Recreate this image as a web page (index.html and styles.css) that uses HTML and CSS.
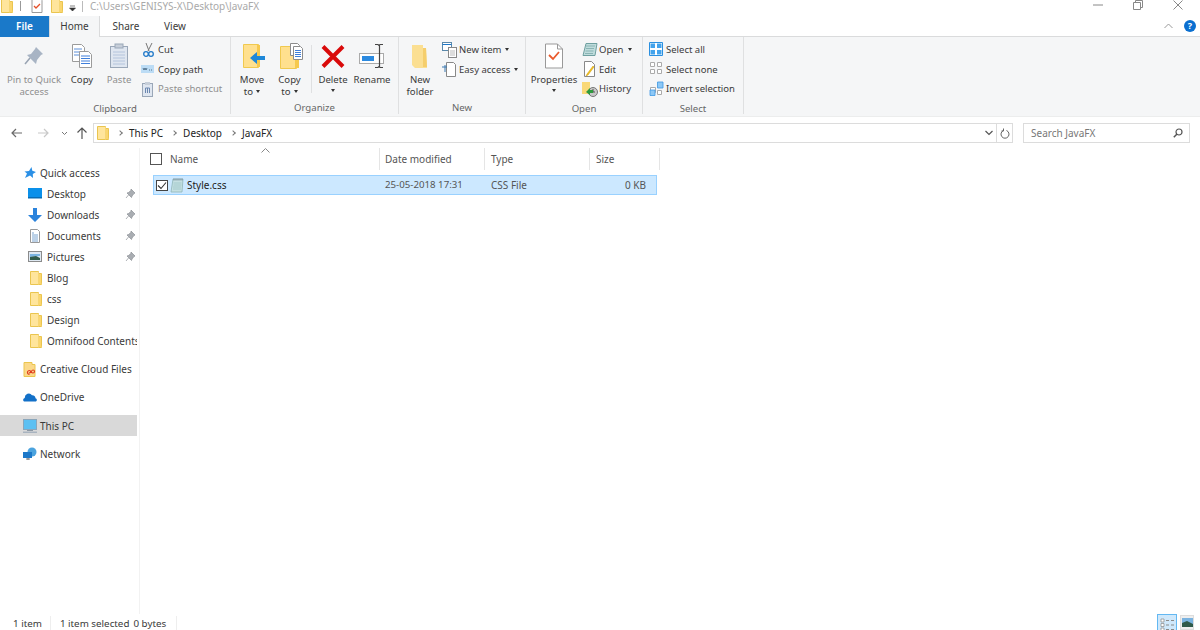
FILE: index.html
```html
<!DOCTYPE html>
<html lang="en">
<head>
<meta charset="utf-8">
<title>JavaFX</title>
<link rel="stylesheet" href="styles.css">
</head>
<body>
<svg class="defs" width="0" height="0">
  <symbol id="folder" viewBox="0 0 12 14"><path d="M.5.5h8v2h3v11H.5z" fill="#ffe59c" stroke="#eac54f"/><path d="M8.500 1v12.500M8.500 6l3 7.500" fill="none" stroke="#f6d675"/><path d="M9 3h2v10H9z" fill="#fbd66e"/></symbol>
  <symbol id="pin" viewBox="0 0 11 11"><path d="M6 1l4 4-1 .5-2 2.500-.5 1.500L2 5l1.500-.5L6 2.500zM3.500 7L1 10" fill="#a9adb2" stroke="#8d9196" stroke-width=".7"/></symbol>
</svg>

<div class="window">
  <header class="titlebar">
    <div class="qat">
      <svg class="q-folder" width="12" height="14"><use href="#folder"/></svg>
      <span class="q-sep"></span>
      <svg class="q-prop" width="12" height="16" viewBox="0 0 12 16"><path d="M1 .5h7l3 3v12H1z" fill="#fff" stroke="#9a9a9a"/><path d="M3 9l2 2 4-4" fill="none" stroke="#e5502a" stroke-width="1.300"/></svg>
      <svg class="q-folder2" width="12" height="14"><use href="#folder"/></svg>
      <svg class="q-down" width="7" height="7" viewBox="0 0 7 7"><path d="M1 1h5M.5 3h6L3.500 6z" fill="#333" stroke="#333" stroke-width=".6"/></svg>
      <span class="q-sep2"></span>
      <span class="path">C:\Users\GENISYS-X\Desktop\JavaFX</span>
    </div>
    <div class="winctl">
      <svg width="10" height="10" viewBox="0 0 10 10"><path d="M0 5h10" stroke="#888"/></svg>
      <svg width="10" height="10" viewBox="0 0 10 10"><path d="M.5 2.500h7v7h-7zM2.500 2.500v-2h7v7h-2" fill="none" stroke="#888"/></svg>
      <svg width="10" height="10" viewBox="0 0 10 10"><path d="M.5.500l9 9M9.500.500l-9 9" stroke="#888"/></svg>
    </div>
  </header>

  <nav class="tabs">
    <span class="tab tab-file">File</span>
    <span class="tab tab-home">Home</span>
    <span class="tab tab-share">Share</span>
    <span class="tab tab-view">View</span>
    <span class="tab-spacer"></span>
    <svg class="collapse" width="9" height="6" viewBox="0 0 9 6"><path d="M.5 5l4-4 4 4" fill="none" stroke="#999"/></svg>
    <span class="help">?</span>
  </nav>

  <section class="ribbon">
    <div class="group g-clip">
      <div class="group-body">
        <div class="big b-pin muted">
          <svg class="big-ico" width="22" height="26" viewBox="0 0 22 26"><path d="M13 4l7 7-2 1-4 5-1 4-9-9 4-1 4-5z" fill="#a8b4c4"/><path d="M7 15l-5 6" stroke="#98a3b2" stroke-width="1.500"/></svg>
          <span class="big-label">Pin to Quick<br>access</span>
        </div>
        <div class="big b-copy">
          <svg class="big-ico" width="22" height="26" viewBox="0 0 22 26"><path d="M1.500 1.500h9l3 3v14h-12z" fill="#fff" stroke="#9b9b9b"/><path d="M3 6h8M3 9h8M3 12h8" stroke="#5d8fd8"/><path d="M8.500 8.500h9l3 3v13h-12z" fill="#fff" stroke="#9b9b9b"/><path d="M10 13h9M10 15.500h9M10 18h9M10 20.500h9" stroke="#3f7fdb"/></svg>
          <span class="big-label">Copy</span>
        </div>
        <div class="big b-paste muted">
          <svg class="big-ico" width="20" height="26" viewBox="0 0 20 26"><rect x="1.500" y="3.500" width="17" height="21" fill="#dfe6f0" stroke="#9aa7b8"/><rect x="6" y="1" width="8" height="4" fill="#c6ced9" stroke="#9aa7b8"/><path d="M4 9h12M4 12h12M4 15h12M4 18h12M4 21h12" stroke="#b4c4dc"/></svg>
          <span class="big-label">Paste</span>
        </div>
        <div class="small-col c-clip">
          <div class="small"><svg width="16" height="16" viewBox="0 0 16 16"><path d="M5 1l3 8M11 1L7 9" stroke="#777" fill="none"/><circle cx="5" cy="12" r="2.300" fill="none" stroke="#1f78c8" stroke-width="1.300"/><circle cx="10" cy="12" r="2.300" fill="none" stroke="#1f78c8" stroke-width="1.300"/></svg><span>Cut</span></div>
          <div class="small"><svg width="16" height="16" viewBox="0 0 16 16"><rect x="0" y="4" width="13" height="8" fill="#bcdcf5"/><path d="M2 7l1 2 1-2 1 2 1-2M8 9h1M10 9h1" stroke="#2b4a66" fill="none" stroke-width=".7"/></svg><span>Copy path</span></div>
          <div class="small muted"><svg width="16" height="16" viewBox="0 0 16 16"><rect x="1.500" y="2.500" width="10" height="13" fill="#dfe6f0" stroke="#9aa7b8"/><rect x="4" y="1" width="5" height="3" fill="#c6ced9"/><path d="M4.500 12V7h4v5M6.500 7v5" fill="none" stroke="#6b87b0"/></svg><span>Paste shortcut</span></div>
        </div>
      </div>
      <div class="group-label">Clipboard</div>
    </div>

    <div class="group g-org">
      <div class="group-body">
        <div class="big b-move">
          <svg class="big-ico" width="26" height="26" viewBox="0 0 26 26"><path d="M4.500 1.500h15v23h-15z" fill="#ffe08e" stroke="#f0c94f"/><path d="M18 2h3v22h-3z" fill="#f6c94d"/><path d="M26 13h-8V9l-7 6 7 6v-4h8z" fill="#1f88d8"/></svg>
          <span class="big-label">Move<br>to<i class="caret"></i></span>
        </div>
        <div class="big b-copyto">
          <svg class="big-ico" width="26" height="26" viewBox="0 0 26 26"><path d="M3.500 3.500h16v22h-16z" fill="#ffe08e" stroke="#f0c94f"/><path d="M18 4h4v21h-4z" fill="#f6c94d"/><path d="M13.500.500h7l2 2v10h-9z" fill="#fff" stroke="#8c8c8c"/><path d="M16.500 3.500h7l2 2v11h-9z" fill="#fff" stroke="#8c8c8c"/><path d="M18 7.500h6M18 9.500h6M18 11.500h6M18 13.500h6" stroke="#3f7fdb"/></svg>
          <span class="big-label">Copy<br>to<i class="caret"></i></span>
        </div>
        <span class="vsep"></span>
        <div class="big b-delete">
          <svg class="big-ico" width="24" height="26" viewBox="0 0 24 26"><path d="M2 3.500l20 20M22 3.500l-20 20" stroke="#d90a0a" stroke-width="4"/></svg>
          <span class="big-label">Delete<br><i class="caret solo"></i></span>
        </div>
        <div class="big b-rename">
          <svg class="big-ico" width="27" height="26" viewBox="0 0 27 26"><rect x=".500" y="10.500" width="24" height="10" fill="#fff" stroke="#aaa"/><rect x="3" y="13" width="12" height="5" fill="#2b8ae0"/><path d="M16 1.500h3l1 1 1-1h3M20.500 2v22M16 24.500h3l1-1 1 1h3" fill="none" stroke="#444" stroke-width="1.200"/></svg>
          <span class="big-label">Rename</span>
        </div>
      </div>
      <div class="group-label">Organize</div>
    </div>

    <div class="group g-new">
      <div class="group-body">
        <div class="big b-newf">
          <svg class="big-ico" width="18" height="26" viewBox="0 0 18 26"><path d="M1 2l11 0 0 3 3 0 1 20-12 0-3-3z" fill="#fbdf92"/><path d="M12 5h3l1 19h-4z" fill="#f5ce6c"/></svg>
          <span class="big-label">New<br>folder</span>
        </div>
        <div class="small-col c-new">
          <div class="small"><svg width="16" height="16" viewBox="0 0 16 16"><rect x=".500" y=".500" width="9" height="8" fill="#fff" stroke="#5a88aa"/><path d="M.500 2.500h9" stroke="#1f78c8"/><rect x="6.500" y="5.500" width="8" height="10" fill="#fff" stroke="#888"/><path d="M8 9h5M8 11h5M8 13h5" stroke="#bbb"/></svg><span>New item<i class="caret inl"></i></span></div>
          <div class="small"><svg width="16" height="16" viewBox="0 0 16 16"><path d="M4.500 1.500h7l2 2v12h-9z" fill="#fff" stroke="#888"/><path d="M0 6h5M3 4v7" stroke="#3a78b0"/></svg><span>Easy access<i class="caret inl"></i></span></div>
        </div>
      </div>
      <div class="group-label">New</div>
    </div>

    <div class="group g-open">
      <div class="group-body">
        <div class="big b-prop">
          <svg class="big-ico" width="20" height="26" viewBox="0 0 20 26"><path d="M1.500 1h12l5 5v19h-17z" fill="#fff" stroke="#999"/><path d="M13.500 1v5h5" fill="none" stroke="#999"/><path d="M5 12l4 4 6-7" fill="none" stroke="#ea5a2c" stroke-width="1.800"/></svg>
          <span class="big-label">Properties<br><i class="caret solo"></i></span>
        </div>
        <div class="small-col c-open">
          <div class="small"><svg width="16" height="16" viewBox="0 0 16 16"><path d="M4 1.500h11l-2 12H1z" fill="#bfdcdc" stroke="#6fa0a0"/><path d="M4 4h9M4 6.500h8M3.500 9h8M3 11.500h8" stroke="#89b4b4"/></svg><span>Open<i class="caret inl"></i></span></div>
          <div class="small"><svg width="16" height="16" viewBox="0 0 16 16"><path d="M2.500.500h7l3 3v12h-10z" fill="#fff" stroke="#888"/><path d="M11 5l-6 8-1 2 2-1 6-8z" fill="#f5c21b" stroke="#c99a10" stroke-width=".5"/></svg><span>Edit</span></div>
          <div class="small"><svg width="16" height="16" viewBox="0 0 16 16"><path d="M0 1h8v12H0z" fill="#f9d877"/><circle cx="11" cy="11" r="4.500" fill="#c8c8c8" stroke="#777"/><path d="M11 8v3h2" fill="none" stroke="#555"/><path d="M8 7l-4 4 4 3V12h3V9H8z" fill="#2e9a3e"/></svg><span>History</span></div>
        </div>
      </div>
      <div class="group-label">Open</div>
    </div>

    <div class="group g-sel">
      <div class="group-body">
        <div class="small-col c-sel">
          <div class="small"><svg width="16" height="16" viewBox="0 0 16 16"><path d="M.500 .500h13v13h-13z" fill="#fff" stroke="#2b90e0"/><path d="M1.500 1.500h4.500v4.500H1.500zM8 1.500h4.500v4.500H8zM1.500 8h4.500v4.500H1.500zM8 8h4.500v4.500H8z" fill="#43a3ec"/></svg><span>Select all</span></div>
          <div class="small"><svg width="16" height="16" viewBox="0 0 16 16"><path d="M1.500 1.500h4v4h-4zM8.500 1.500h4v4h-4zM1.500 8.500h4v4h-4zM8.500 8.500h4v4h-4z" fill="#fff" stroke="#aaa"/></svg><span>Select none</span></div>
          <div class="small"><svg width="16" height="16" viewBox="0 0 16 16"><path d="M1.500 6.500h5v5h-5zM8.500 9.500h4v4h-4z" fill="#fff" stroke="#aaa"/><path d="M8.500 1h5.500v6H8.500zM1 9h5v5.500H1z" fill="#8ec8f5" stroke="#3c98e4" stroke-width=".8"/></svg><span>Invert selection</span></div>
        </div>
      </div>
      <div class="group-label">Select</div>
    </div>
  </section>

  <section class="navrow">
    <div class="navbtns">
      <svg class="n-back" width="12" height="10" viewBox="0 0 12 10"><path d="M11 5H1M5 1L1 5l4 4" fill="none" stroke="#6b6b6b" stroke-width="1.200"/></svg>
      <svg class="n-fwd" width="12" height="10" viewBox="0 0 12 10"><path d="M1 5h10M7 1l4 4-4 4" fill="none" stroke="#c8c8c8" stroke-width="1.200"/></svg>
      <svg class="n-drop" width="7" height="5" viewBox="0 0 7 5"><path d="M1 1l2.500 2.500L6 1" fill="none" stroke="#777"/></svg>
      <svg class="n-up" width="12" height="12" viewBox="0 0 12 12"><path d="M6 12V1M1.500 5.500L6 1l4.500 4.500" fill="none" stroke="#555" stroke-width="1.200"/></svg>
    </div>
    <div class="address">
      <svg class="a-folder" width="12" height="14"><use href="#folder"/></svg>
      <i class="crumb-sep"></i><span>This PC</span>
      <i class="crumb-sep"></i><span>Desktop</span>
      <i class="crumb-sep"></i><span>JavaFX</span>
      <span class="a-spacer"></span>
      <svg class="a-drop" width="8" height="6" viewBox="0 0 8 6"><path d="M.500 1l3.500 3.500L7.500 1" fill="none" stroke="#555" stroke-width="1.200"/></svg>
      <span class="a-refresh"><svg width="10" height="11" viewBox="0 0 10 11"><path d="M3.500 2.500a4 4 0 1 0 3 0M3.500.500v2.500h-2" fill="none" stroke="#666"/></svg></span>
    </div>
    <div class="search">
      <span>Search JavaFX</span>
      <svg width="10" height="10" viewBox="0 0 10 10"><circle cx="6" cy="4" r="3" fill="none" stroke="#555" stroke-width="1.200"/><path d="M4 6L.800 9.200" stroke="#555" stroke-width="1.500"/></svg>
    </div>
  </section>

  <div class="content">
    <aside class="sidebar">
      <div class="row top"><svg width="12" height="12" viewBox="0 0 12 12"><path d="M7.500 0l.8 3.800L12 5 8.800 7l.2 4-3-2.500L1 11l2-4.500L.5 4.500 5 4z" fill="#2b90e6"/></svg><span>Quick access</span></div>
      <div class="row child"><svg width="14" height="11" viewBox="0 0 14 11"><rect width="14" height="10" fill="#0a90ea"/><path d="M0 9h14v1.500H0z" fill="#076cb5"/></svg><span>Desktop</span><svg class="pin" width="11" height="11"><use href="#pin"/></svg></div>
      <div class="row child"><svg width="14" height="14" viewBox="0 0 14 14"><path d="M5 0h4v7h5l-7 7-7-7h5z" fill="#2b83dc"/></svg><span>Downloads</span><svg class="pin" width="11" height="11"><use href="#pin"/></svg></div>
      <div class="row child"><svg width="14" height="14" viewBox="0 0 14 14"><path d="M2.500.500h7l2 2v11h-9z" fill="#fff" stroke="#999"/><path d="M4 4h2M4 6h6M4 8h6M4 10h6M4 12h6" stroke="#7ba4cf"/></svg><span>Documents</span><svg class="pin" width="11" height="11"><use href="#pin"/></svg></div>
      <div class="row child"><svg width="14" height="12" viewBox="0 0 14 12"><rect x=".500" y=".500" width="13" height="10" fill="#dfe9f3" stroke="#8b8b8b"/><path d="M2 3h10v2l-10 1z" fill="#7ab3e0"/><path d="M2 6l6-1 4 2v2H2z" fill="#2f5a4a"/></svg><span>Pictures</span><svg class="pin" width="11" height="11"><use href="#pin"/></svg></div>
      <div class="row child"><svg class="fold" width="12" height="14"><use href="#folder"/></svg><span>Blog</span></div>
      <div class="row child"><svg class="fold" width="12" height="14"><use href="#folder"/></svg><span>css</span></div>
      <div class="row child"><svg class="fold" width="12" height="14"><use href="#folder"/></svg><span>Design</span></div>
      <div class="row child"><svg class="fold" width="12" height="14"><use href="#folder"/></svg><span>Omnifood Contents</span></div>
      <div class="row top gap"><svg class="ccf" width="13" height="15" viewBox="0 0 13 15"><path d="M.500.500h8v2h3v12h-11z" fill="#fbd98a" stroke="#eac54f"/><path d="M6 12.500a2 2 0 0 1 0-4c1 0 2 2.500 3.500 2.500a1.500 1.500 0 0 0 0-3c-1.500 0-2 3-4 3" fill="none" stroke="#e03c1f" stroke-width="1.200"/></svg><span>Creative Cloud Files</span></div>
      <div class="row top gap"><svg width="14" height="10" viewBox="0 0 14 10"><path d="M1 9.500a2 2 0 0 1 .8-3.600A4 4 0 0 1 9 3.200a3 3 0 0 1 3.500 3A1.800 1.800 0 0 1 13 9.500z" fill="#1270c8"/></svg><span>OneDrive</span></div>
      <div class="row top gap selected"><svg width="14" height="14" viewBox="0 0 14 14"><rect x=".500" y=".500" width="13" height="10" fill="#5cc0f2" stroke="#8aa6bb"/><path d="M4 11h6v1H4z" fill="#8c98a4"/><path d="M0 12.500h14V14H0z" fill="#a8b3bf"/></svg><span>This PC</span></div>
      <div class="row top gap"><svg width="14" height="14" viewBox="0 0 14 14"><circle cx="9" cy="5" r="4.500" fill="#4ba3de"/><rect x="0" y="5" width="9" height="6" fill="#1c78c8"/><path d="M3 12h4M5 11v2" stroke="#777"/></svg><span>Network</span></div>
    </aside>

    <main class="files">
      <div class="header">
        <div class="col col-name">
          <span class="chk"></span><span>Name</span>
          <svg class="sort" width="9" height="5" viewBox="0 0 9 5"><path d="M.500 4.500l4-4 4 4" fill="none" stroke="#888"/></svg>
        </div>
        <div class="col col-date">Date modified</div>
        <div class="col col-type">Type</div>
        <div class="col col-size">Size</div>
      </div>
      <div class="file">
        <span class="chk small-chk"><svg width="10" height="9" viewBox="0 0 10 9"><path d="M1 4.500l3 3 5-6" fill="none" stroke="#333" stroke-width="1.100"/></svg></span>
        <svg class="file-ico" width="14" height="15" viewBox="0 0 14 15"><path d="M3 1h10l-1 13H1z" fill="#c5e0e2" stroke="#8fb5b8" stroke-width=".8"/><path d="M4 .500v2M6 .500v2M8 .500v2M10 .500v2M12 .500v2" stroke="#789"/><path d="M3.500 5h8M3.500 7h8M3 9h8M3 11h8" stroke="#a4cacc"/></svg>
        <span class="f-name">Style.css</span>
        <span class="f-date">25-05-2018 17:31</span>
        <span class="f-type">CSS File</span>
        <span class="f-size">0 KB</span>
      </div>
    </main>
  </div>

  <footer class="status">
    <span class="s-count">1 item</span>
    <span class="s-sep"></span>
    <span class="s-sel">1 item selected</span>
    <span class="s-bytes">0 bytes</span>
    <span class="s-sep s-sep2"></span>
    <span class="s-spacer"></span>
    <span class="view-on"><svg width="15" height="14" viewBox="0 0 15 14"><path d="M1 2h3v3H1zM1 6.500h3v3H1zM1 11h3v3H1z" fill="#fff" stroke="#888" stroke-width=".7"/><path d="M6 3.500h3M11 3.500h3M6 8h3M11 8h3M6 12.500h3M11 12.500h3" stroke="#8a8a8a" stroke-width="1.200"/></svg></span>
    <span class="view-off"><svg width="11" height="9" viewBox="0 0 11 9"><rect width="11" height="9" fill="#7ab3e0"/><path d="M0 5l5-2 6 3v3H0z" fill="#2f5a4a"/></svg></span>
  </footer>
</div>
</body>
</html>
```
FILE: styles.css
```css
* { box-sizing: border-box; }
html, body { margin: 0; padding: 0; height: 630px; overflow: hidden; background: #fff; }
body { font-family: "Noto Sans", "Open Sans", sans-serif; font-size: 10px; color: #3a3a3a; line-height: 1.2; }
svg { display: block; flex: none; }
.defs { position: absolute; }
i { font-style: normal; }
.window { display: flex; flex-direction: column; height: 630px; }

/* title bar */
.titlebar { height: 16px; display: flex; justify-content: space-between; overflow: hidden; flex: none; }
.qat { display: flex; align-items: flex-end; }
.q-folder { margin: 0 0 3px 1px; }
.q-sep { width: 1px; height: 10px; background: #999; margin: 0 0 5px 7px; }
.q-prop { margin: 0 0 3px 10px; }
.q-folder2 { margin: 0 0 3px 8px; }
.q-down { margin: 0 0 4px 6px; }
.q-sep2 { width: 1px; height: 11px; background: #bbb; margin: 0 0 4px 6px; }
.path { color: #a9a9a9; margin: 0 0 3px 7px; line-height: 13px; }
.winctl { display: flex; gap: 30px; padding: 0 17px 0 0; margin-top: -1px; align-items: flex-start; }
.winctl svg { margin-top: 1px; }

/* tabs */
.tabs { height: 21px; display: flex; align-items: center; flex: none; border-bottom: 1px solid #dadbdc; }
.tab { height: 21px; display: flex; align-items: center; justify-content: center; }
.tab-file { width: 49px; background: #1a79c9; color: #fff; font-weight: 600; }
.tab-home { width: 51px; height: 22px; padding-bottom: 2px; align-self: flex-start; background: #f5f6f7; border: 1px solid #dadbdc; border-bottom: 0; border-top: 0; }
.tab-share { width: 52px; }
.tab-view { width: 46px; }
.tab-spacer { flex: 1; }
.collapse { margin-right: 11px; }
.help { width: 12px; height: 12px; border-radius: 50%; background: #0a6fd0; color: #fff; font-weight: 700; font-size: 9px; line-height: 12px; text-align: center; margin-right: 4px; }

/* ribbon */
.ribbon { height: 80px; background: #f5f6f7; display: flex; flex: none; border-bottom: 1px solid #eceded; }
.group { padding-top: 3px; display: flex; flex-direction: column; border-right: 1px solid #dfe0e1; margin-bottom: 2px; }
.g-clip { width: 231px; }
.g-org { width: 168px; }
.g-new { width: 127px; }
.g-open { width: 117px; }
.g-sel { width: 101px; }
.group-body { height: 60px; display: flex; }
.g-clip .group-body { padding-left: 4px; }
.g-org .group-body, .g-new .group-body { padding-left: 2px; }
.g-open .group-body { padding-left: 8px; }
.g-sel .group-body { padding-left: 6px; }
.group-label { height: 14px; margin-top: 2px; text-align: center; color: #666; line-height: 15px; font-size: 9.600px; }
.big { display: flex; flex-direction: column; align-items: center; text-align: center; flex: none; }
.big-ico { height: 26px; margin: 3px 0 5px; }
.big-label { line-height: 11.500px; white-space: nowrap; font-size: 9.600px; }
.muted { color: #8f8f8f; }
.b-pin { width: 60px; }
.b-copy { width: 36px; }
.b-paste { width: 38px; }
.b-move { width: 38px; }
.b-copyto { width: 37px; }
.b-delete { width: 38px; }
.b-rename { width: 40px; }
.b-newf { width: 38px; }
.b-prop { width: 40px; }
.vsep { width: 1px; height: 48px; background: #dfe0e1; margin: 5px 2px 0 3px; }
.caret { display: inline-block; width: 0; height: 0; border: 2.500px solid transparent; border-top: 3px solid #333; border-bottom: 0; margin-left: 3px; vertical-align: 2px; }
.caret.solo { margin-left: 0; vertical-align: 3px; }
.caret.inl { margin-left: 4px; }
.small-col { display: flex; flex-direction: column; }
.small { height: 19.500px; display: flex; align-items: center; gap: 1px; white-space: nowrap; font-size: 9.500px; }
.c-clip { margin-left: 3px; }
.c-new { margin-left: 3px; }
.c-open { margin-left: 8px; }

/* navigation row */
.navrow { height: 31px; display: flex; align-items: center; flex: none; padding-top: 1px; }
.navbtns { width: 93px; display: flex; align-items: center; flex: none; }
.n-back { margin-left: 11px; }
.n-fwd { margin-left: 14px; }
.n-drop { margin-left: 12px; }
.n-up { margin-left: 8px; }
.address { width: 920px; height: 20px; border: 1px solid #dcdcdc; display: flex; align-items: center; flex: none; color: #222; }
.a-folder { margin: 0 7px 0 3px; }
.crumb-sep { width: 4px; height: 4px; border-top: 1px solid #777; border-right: 1px solid #777; transform: rotate(45deg); margin: 0 7px 0 2px; }
.address span + .crumb-sep { margin-left: 9px; }
.a-spacer { flex: 1; }
.a-drop { margin-right: 3px; }
.a-refresh { width: 16px; height: 18px; border-left: 1px solid #dcdcdc; display: flex; align-items: center; justify-content: center; }
.search { width: 167px; height: 20px; margin-left: 10px; border: 1px solid #dcdcdc; display: flex; align-items: center; justify-content: space-between; padding: 0 6px 0 7px; color: #777; flex: none; }

/* content */
.content { flex: 1; display: flex; min-height: 0; }
.sidebar { width: 140px; padding-top: 14px; border-right: 1px solid #f2f2f2; flex: none; overflow: hidden; }
.row { width: 137px; height: 21.100px; display: flex; align-items: center; overflow: hidden; white-space: nowrap; position: relative; }
.row.top { padding-left: 23px; }
.row.top span { margin-left: 3px; }
.row.top svg { width: 14px; }
.row.gap { margin-top: 7px; }
.row.child { padding-left: 28px; }
.row.child span { margin-left: 5px; }
.row .fold { margin-left: 2px; }
.row .pin { position: absolute; left: 125px; top: 5px; }
.selected { background: #d9d9d9; }

.files { flex: 1; color: #555; }
.header { height: 22px; display: flex; margin-bottom: 5px; }
.col { display: flex; align-items: center; border-right: 1px solid #e5e5e5; position: relative; }
.col-name { width: 240px; padding-left: 10px; gap: 8px; }
.col-date { width: 105px; padding-left: 5px; }
.col-type { width: 105px; padding-left: 6px; }
.col-size { width: 70px; padding-left: 6px; }
.chk { width: 12px; height: 12px; border: 1px solid #555; background: #fff; flex: none; }
.sort { position: absolute; left: 121px; top: 0; }
.file { margin-left: 13px; width: 504px; height: 20px; background: #cce8ff; border: 1px solid #99d1ff; display: flex; align-items: center; position: relative; }
.small-chk { width: 12px; height: 11px; margin-left: 2px; border-color: #444; display: flex; align-items: center; justify-content: center; }
.file-ico { margin-left: 2px; }
.f-name { color: #222; margin-left: 3px; width: 198px; }
.f-date { width: 106px; font-size: 9.700px; }
.f-type { width: 100px; }
.f-size { width: 55px; text-align: right; }

/* status */
.status { height: 16px; flex: none; display: flex; align-items: flex-start; overflow: hidden; font-size: 9.800px; }
.status > span { line-height: 20px; }
.s-count { margin-left: 13px; }
.s-sep { width: 1px; height: 14px; background: #eee; margin: 2px 9px 0 8px; }
.s-sep2 { margin-left: 10px; }
.s-bytes { margin-left: 4px; }
.s-spacer { flex: 1; }
.view-on { width: 20px; height: 17px; border: 1px solid #63b8f2; background: #cfe8fb; padding: 2px 0 0 2px; }
.view-off { width: 14px; height: 15px; margin: 1px 6px 0 3px; background: #eee; border: 1px solid #ddd; padding: 2px 0 0 1px; }
```
